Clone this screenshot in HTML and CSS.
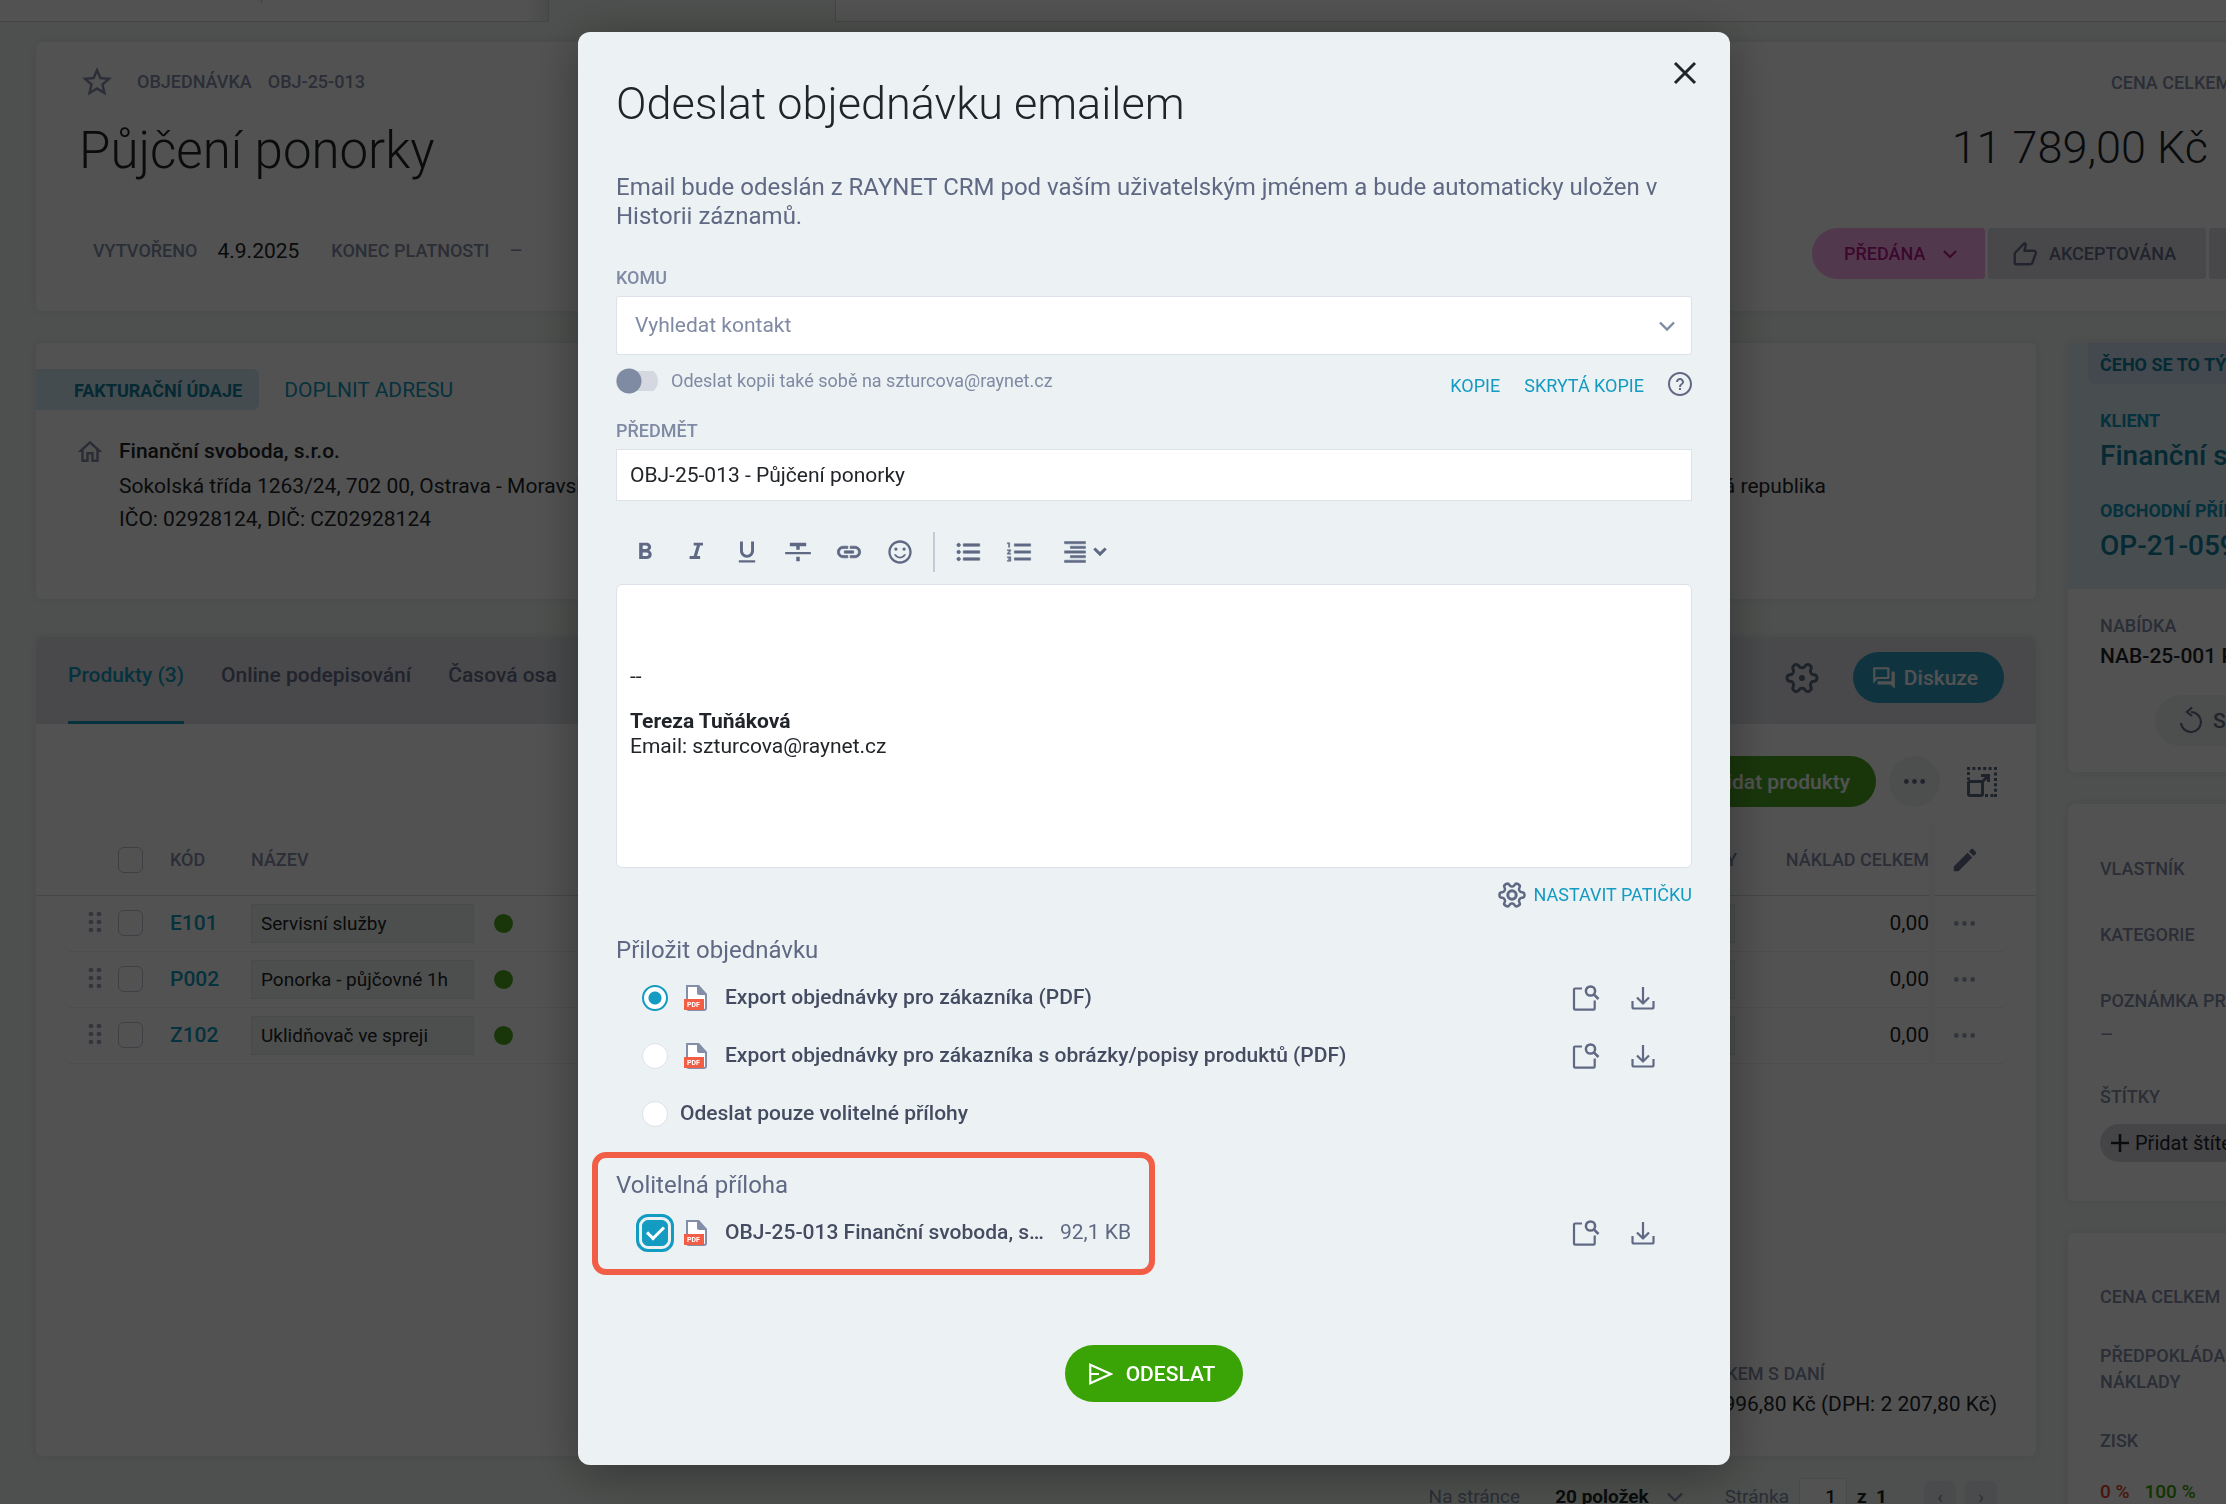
FILE: index.html
```html
<!DOCTYPE html>
<html lang="cs">
<head>
    <meta charset="UTF-8">
    <title>Půjčení ponorky - Objednávka</title>
    <link rel="stylesheet" href="styles.css">
</head>
<body>
    <svg class="sprite" aria-hidden="true">
        <symbol id="i-gear" viewBox="0 0 24 24"><path transform="rotate(90 12 12)" fill="none" stroke="currentColor" stroke-width="2" d="M12.22 2h-.44a2 2 0 0 0-2 2v.18a2 2 0 0 1-1 1.73l-.43.25a2 2 0 0 1-2 0l-.15-.08a2 2 0 0 0-2.73.73l-.22.38a2 2 0 0 0 .73 2.73l.15.1a2 2 0 0 1 1 1.72v.51a2 2 0 0 1-1 1.74l-.15.09a2 2 0 0 0-.73 2.73l.22.38a2 2 0 0 0 2.73.73l.15-.08a2 2 0 0 1 2 0l.43.25a2 2 0 0 1 1 1.73V20a2 2 0 0 0 2 2h.44a2 2 0 0 0 2-2v-.18a2 2 0 0 1 1-1.73l.43-.25a2 2 0 0 1 2 0l.15.08a2 2 0 0 0 2.73-.73l.22-.39a2 2 0 0 0-.73-2.73l-.15-.08a2 2 0 0 1-1-1.74v-.5a2 2 0 0 1 1-1.74l.15-.09a2 2 0 0 0 .73-2.73l-.22-.38a2 2 0 0 0-2.73-.73l-.15.08a2 2 0 0 1-2 0l-.43-.25a2 2 0 0 1-1-1.73V4a2 2 0 0 0-2-2z"/></symbol>
        <symbol id="i-chevron" viewBox="0 0 16 16"><path fill="none" stroke="currentColor" stroke-width="2.400" d="M1 4.500l7 7 7-7"/></symbol>
        <symbol id="i-dots" viewBox="0 0 24 24"><circle cx="3.500" cy="12" r="2.500"/><circle cx="12" cy="12" r="2.500"/><circle cx="20.500" cy="12" r="2.500"/></symbol>
        <symbol id="i-grip" viewBox="0 0 14 24"><circle cx="3" cy="3" r="2.300"/><circle cx="11" cy="3" r="2.300"/><circle cx="3" cy="11" r="2.300"/><circle cx="11" cy="11" r="2.300"/><circle cx="3" cy="19" r="2.300"/><circle cx="11" cy="19" r="2.300"/></symbol>
        <symbol id="i-preview" viewBox="0 0 28 28"><path fill="none" stroke="currentColor" stroke-width="2.200" stroke-linejoin="round" d="M10 4.500H3a1 1 0 0 0-1 1V24.500a1.200 1.200 0 0 0 1.200 1.200H21.500a1.200 1.200 0 0 0 1.200-1.200V16.500"/><circle cx="18.500" cy="7" r="4.600" fill="none" stroke="currentColor" stroke-width="2.500"/><path stroke="currentColor" stroke-width="2.600" d="M21.800 10.300l4.700 4.700"/></symbol>
        <symbol id="i-download" viewBox="0 0 24 24"><path fill="none" stroke="currentColor" stroke-width="2.200" stroke-linejoin="round" d="M12 1v16M6 11.500l6 6 6-6M1.500 15v6a1.500 1.500 0 0 0 1.500 1.500h18a1.500 1.500 0 0 0 1.500-1.500v-6"/></symbol>
        <symbol id="i-pdf" viewBox="0 0 24 28"><path fill="#fff" stroke="#838ea8" stroke-width="2" d="M3 2h11l8 9v13a2 2 0 0 1-2 2H5a2 2 0 0 1-2-2z"/><path fill="#838ea8" d="M13 1h2l8 9v1H15a2 2 0 0 1-2-2z"/><path fill="#f15d45" d="M0 15h20v11H0z"/><text x="3" y="23" font-family="Roboto, sans-serif" font-size="7" font-weight="700" fill="#fff">PDF</text></symbol>
    </svg>

    <div class="page">
        <header class="topbar">
            <div class="topbar__tabs"><i></i></div>
            <div class="topbar__active"></div>
            <div class="topbar__rest"></div>
        </header>

        <section class="card record">
            <div class="record__main">
                <div class="record__crumb">
                    <svg class="record__star" viewBox="0 0 24 24" fill="currentColor"><path d="M22 9.240l-7.190-.62L12 2 9.190 8.630 2 9.240l5.460 4.730L5.820 21 12 17.270 18.180 21l-1.630-7.030L22 9.240zM12 15.400l-3.760 2.270 1-4.280-3.320-2.880 4.380-.38L12 6.100l1.710 4.040 4.380.38-3.320 2.880 1 4.280L12 15.400z"/></svg>
                    <span class="label">OBJEDNÁVKA</span>
                    <span class="label">OBJ-25-013</span>
                </div>
                <h1 class="record__title">Půjčení ponorky</h1>
                <div class="record__meta">
                    <span class="label">VYTVOŘENO</span><span>4.9.2025</span>
                    <span class="label">KONEC PLATNOSTI</span><span class="muted">–</span>
                </div>
            </div>
            <div class="record__side">
                <div class="label record__pricelabel">CENA CELKEM</div>
                <div class="record__price">11 789,00 Kč</div>
                <div class="status">
                    <button class="status__item status__item--current" type="button">PŘEDÁNA <svg width="14" height="14"><use href="#i-chevron"/></svg></button>
                    <button class="status__item" type="button"><svg width="26" height="26" viewBox="0 0 24 24" fill="none" stroke="currentColor" stroke-width="2.200" stroke-linejoin="round"><path d="M2.500 12a2 2 0 0 1 .6-1.400L11.500 2l1.300 1.200-1.300 5.800H20a2 2 0 0 1 1.900 2.600l-3 8.400A2 2 0 0 1 17 21.500H4.500a2 2 0 0 1-2-2z"/></svg>AKCEPTOVÁNA</button>
                    <button class="status__item status__item--last" type="button" aria-label="Další stav"></button>
                </div>
            </div>
        </section>

        <div class="columns">
            <main class="main">
                <section class="card billing">
                    <div class="billing__head">
                        <h2 class="tag">FAKTURAČNÍ ÚDAJE</h2>
                        <a class="link" href="#">DOPLNIT ADRESU</a>
                    </div>
                    <div class="billing__body">
                        <svg class="billing__icon" viewBox="0 0 24 24" fill="currentColor"><path d="M12 5.690l5 4.500V18h-2v-6H9v6H7v-7.810l5-4.500M12 3L2 12h3v8h6v-6h2v6h6v-8h3L12 3z"/></svg>
                        <div class="billing__text">
                            <strong>Finanční svoboda, s.r.o.</strong>
                            <p class="billing__address"><span>Sokolská třída 1263/24, 702 00, Ostrava - Moravská Ostrava a Přívoz,</span><span>Česká republika</span></p>
                            <p>IČO: 02928124, DIČ: CZ02928124</p>
                        </div>
                    </div>
                </section>

                <section class="card products">
                    <div class="tabs">
                        <a class="tabs__item tabs__item--active" href="#">Produkty (3)</a>
                        <a class="tabs__item" href="#">Online podepisování</a>
                        <a class="tabs__item" href="#">Časová osa</a>
                        <button class="iconbtn tabs__gear" type="button" aria-label="Nastavení"><svg width="36" height="36"><use href="#i-gear"/><circle cx="18" cy="18" r="3" fill="currentColor"/></svg></button>
                        <button class="pill pill--teal" type="button"><svg width="26" height="26" viewBox="0 0 24 24" fill="currentColor"><path d="M15 4v7H5.170L4 12.170V4h11m1-2H3c-.55 0-1 .45-1 1v14l4-4h10c.55 0 1-.45 1-1V3c0-.55-.45-1-1-1zm5 4h-2v9H6v2c0 .55.45 1 1 1h11l4 4V7c0-.55-.45-1-1-1z"/></svg>Diskuze</button>
                    </div>
                    <div class="products__tools">
                        <button class="pill pill--green" type="button">Přidat produkty</button>
                        <button class="pill pill--round" type="button" aria-label="Více"><svg width="23" height="23"><use href="#i-dots"/></svg></button>
                        <button class="iconbtn" type="button" aria-label="Zvětšit"><svg width="30" height="30" viewBox="0 0 30 30" fill="none" stroke="currentColor" stroke-width="3"><path stroke-dasharray="3 2.400" d="M0 1.500h30M28.500 5.500v24.500M1.500 5v8M18 28.500h10"/><rect x="1.500" y="14.500" width="14" height="14" rx="1.500"/><path d="M15 15l7-7M14 8.500h7.500V15"/></svg></button>
                    </div>
                    <table class="grid">
                        <colgroup><col class="c-pad"><col class="c-grip"><col class="c-check"><col class="c-code"><col class="c-name"><col><col class="c-price"><col class="c-cost"><col class="c-edit"><col class="c-pad"></colgroup>
                        <thead>
                            <tr><th></th><th></th><th><input type="checkbox" aria-label="Vybrat vše"></th><th>KÓD</th><th>NÁZEV</th><th></th><th class="num">SLEVY</th><th class="num">NÁKLAD CELKEM</th><th class="edit"><svg width="30" height="30" viewBox="0 0 24 24" fill="currentColor"><path d="M3 17.250V21h3.750L17.810 9.940l-3.750-3.750L3 17.250zM20.710 7.040c.39-.39.39-1.020 0-1.410l-2.340-2.340c-.39-.39-1.020-.39-1.410 0l-1.830 1.830 3.750 3.750 1.830-1.830z"/></svg></th><th></th></tr>
                        </thead>
                        <tbody>
                            <tr><td></td><td><svg class="grip"><use href="#i-grip"/></svg></td><td><input type="checkbox" aria-label="Vybrat E101"></td><td><a href="#">E101</a></td><td><div class="cell">Servisní služby</div></td><td><i class="dot"></i></td><td><div class="cell"></div></td><td class="num">0,00</td><td class="edit"><svg width="23" height="23"><use href="#i-dots"/></svg></td><td></td></tr>
                            <tr><td></td><td><svg class="grip"><use href="#i-grip"/></svg></td><td><input type="checkbox" aria-label="Vybrat P002"></td><td><a href="#">P002</a></td><td><div class="cell">Ponorka - půjčovné 1h</div></td><td><i class="dot"></i></td><td><div class="cell"></div></td><td class="num">0,00</td><td class="edit"><svg width="23" height="23"><use href="#i-dots"/></svg></td><td></td></tr>
                            <tr><td></td><td><svg class="grip"><use href="#i-grip"/></svg></td><td><input type="checkbox" aria-label="Vybrat Z102"></td><td><a href="#">Z102</a></td><td><div class="cell">Uklidňovač ve spreji</div></td><td><i class="dot"></i></td><td><div class="cell"></div></td><td class="num">0,00</td><td class="edit"><svg width="23" height="23"><use href="#i-dots"/></svg></td><td></td></tr>
                        </tbody>
                    </table>
                    <div class="products__total">
                        <div>
                            <div class="label">CELKEM S DANÍ</div>
                            <div>13 996,80 Kč (DPH: 2 207,80 Kč)</div>
                        </div>
                    </div>
                </section>

                <div class="pager">
                    <span class="muted">Na stránce</span>
                    <button class="pager__size" type="button">20 položek <svg width="16" height="16"><use href="#i-chevron"/></svg></button>
                    <label class="muted" for="pageno">Stránka</label>
                    <input class="pager__input" id="pageno" type="text" value="1">
                    <b>z&nbsp; 1</b>
                    <button class="pager__nav" type="button">‹</button>
                    <button class="pager__nav" type="button">›</button>
                </div>
            </main>

            <aside class="side">
                <section class="card">
                    <div class="related">
                        <h2 class="tag tag--side">ČEHO SE TO TÝKÁ</h2>
                        <div class="related__label">KLIENT</div>
                        <a class="related__link" href="#">Finanční svoboda, s.r.o.</a>
                        <div class="related__label">OBCHODNÍ PŘÍPAD</div>
                        <a class="related__link" href="#">OP-21-059</a>
                    </div>
                    <div class="offer">
                        <div class="label">NABÍDKA</div>
                        <strong>NAB-25-001 Ponorka</strong>
                        <button class="pill pill--grey" type="button"><svg width="24" height="28" viewBox="0 0 24 28" fill="none" stroke="currentColor" stroke-width="2.200"><path d="M12 5a10 10 0 1 1-10 11M13 .5L8 5l5 4"/></svg>Synchronizovat</button>
                    </div>
                </section>
                <section class="card detail">
                    <div class="label">VLASTNÍK</div>
                    <div class="label">KATEGORIE</div>
                    <div class="label">POZNÁMKA PRO</div>
                    <div class="muted">–</div>
                    <div class="label">ŠTÍTKY</div>
                    <button class="chip" type="button"><svg width="18" height="18" viewBox="0 0 18 18" stroke="currentColor" stroke-width="2.500"><path d="M9 0v18M0 9h18"/></svg>Přidat štítek</button>
                </section>
                <section class="card sums">
                    <div class="label">CENA CELKEM</div>
                    <div class="label">PŘEDPOKLÁDANÉ<br>NÁKLADY</div>
                    <div class="label">ZISK</div>
                    <div class="sums__pct"><span class="red">0 %</span><span class="green">100 %</span></div>
                </section>
            </aside>
        </div>
    </div>

    <div class="backdrop">
        <form class="modal" role="dialog" aria-labelledby="modal-title">
            <button class="iconbtn modal__close" type="button" aria-label="Zavřít"><svg width="24" height="24" viewBox="0 0 24 24" stroke="currentColor" stroke-width="3"><path d="M2 2l20 20M22 2L2 22"/></svg></button>
            <h2 class="modal__title" id="modal-title">Odeslat objednávku emailem</h2>
            <p class="modal__intro">Email bude odeslán z RAYNET CRM pod vaším uživatelským jménem a bude automaticky uložen v Historii záznamů.</p>

            <label class="label modal__label" for="to">KOMU</label>
            <div class="combo">
                <select id="to"><option>Vyhledat kontakt</option></select>
                <svg width="16" height="16"><use href="#i-chevron"/></svg>
            </div>
            <div class="copyrow">
                <input class="toggle" id="copy" type="checkbox" role="switch">
                <label for="copy">Odeslat kopii také sobě na szturcova@raynet.cz</label>
                <a class="link link--small" href="#">KOPIE</a>
                <a class="link link--small" href="#">SKRYTÁ KOPIE</a>
                <svg width="24" height="24" viewBox="0 0 24 24" fill="currentColor"><path d="M11 18h2v-2h-2v2zm1-18C5.370 0 0 5.370 0 12s5.370 12 12 12 12-5.370 12-12S18.630 0 12 0zm0 22C6.500 22 2 17.500 2 12S6.500 2 12 2s10 4.500 10 10-4.500 10-10 10zm0-16c-2.210 0-4 1.790-4 4h2c0-1.100.9-2 2-2s2 .9 2 2c0 2-3 1.750-3 5h2c0-2.250 3-2.500 3-5 0-2.210-1.790-4-4-4z"/></svg>
            </div>

            <label class="label modal__label" for="subject">PŘEDMĚT</label>
            <input class="subject" id="subject" type="text" value="OBJ-25-013 - Půjčení ponorky">

            <div class="toolbar">
                <button type="button" aria-label="Tučné"><svg viewBox="0 0 24 24"><path d="M15.600 10.790c.97-.67 1.650-1.770 1.650-2.790 0-2.260-1.750-4-4-4H7v14h7.040c2.090 0 3.710-1.700 3.710-3.790 0-1.520-.86-2.820-2.150-3.420zM10 6.500h3c.83 0 1.500.67 1.500 1.500s-.67 1.500-1.500 1.500h-3v-3zm3.500 9H10v-3h3.500c.83 0 1.500.67 1.500 1.500s-.67 1.500-1.500 1.500z"/></svg></button>
                <button type="button" aria-label="Kurzíva"><svg viewBox="0 0 24 24"><path d="M10 4v2.500h2.700l-2.700 9H6.500V18h9v-2.500h-2.700l2.700-9H18V4z"/></svg></button>
                <button type="button" aria-label="Podtržené"><svg viewBox="0 0 24 24"><path d="M12 17c3.310 0 6-2.690 6-6V3h-2.500v8c0 1.930-1.570 3.500-3.500 3.500S8.500 12.930 8.500 11V3H6v8c0 3.310 2.690 6 6 6zm-7 2v2h14v-2H5z"/></svg></button>
                <button type="button" aria-label="Přeškrtnuté"><svg viewBox="0 0 24 24"><path d="M10.500 20h3v-4h-3v4zM5 4v3h5.500v3h3V7H19V4H5zM1 14h22v-2H1v2z"/></svg></button>
                <button type="button" aria-label="Odkaz"><svg viewBox="0 0 24 24"><path stroke="currentColor" stroke-width=".6" d="M3.900 12c0-1.710 1.390-3.100 3.100-3.100h4V7H7c-2.760 0-5 2.240-5 5s2.240 5 5 5h4v-1.900H7c-1.710 0-3.100-1.390-3.100-3.100zM8 13h8v-2H8v2zm9-6h-4v1.900h4c1.710 0 3.100 1.390 3.100 3.100s-1.390 3.100-3.100 3.100h-4V17h4c2.760 0 5-2.240 5-5s-2.240-5-5-5z"/></svg></button>
                <button type="button" aria-label="Emotikon"><svg viewBox="0 0 24 24"><circle cx="15.500" cy="9.500" r="1.400"/><circle cx="8.500" cy="9.500" r="1.400"/><path d="M12 16c-1.480 0-2.750-.81-3.450-2H6.880c.8 2.050 2.790 3.500 5.120 3.500s4.320-1.450 5.120-3.500h-1.670c-.7 1.190-1.970 2-3.450 2zm-.01-14C6.470 2 2 6.480 2 12s4.470 10 9.990 10C17.520 22 22 17.520 22 12S17.520 2 11.990 2zM12 20c-4.420 0-8-3.580-8-8s3.580-8 8-8 8 3.580 8 8-3.580 8-8 8z"/></svg></button>
                <i class="toolbar__sep"></i>
                <button type="button" aria-label="Odrážky"><svg viewBox="0 0 24 24"><path stroke="currentColor" stroke-width=".6" d="M4 10.500c-.83 0-1.500.67-1.500 1.500s.67 1.500 1.500 1.500 1.500-.67 1.500-1.500-.67-1.500-1.500-1.500zm0-6c-.83 0-1.500.67-1.500 1.500S3.170 7.500 4 7.500 5.500 6.830 5.500 6 4.830 4.500 4 4.500zm0 12c-.83 0-1.500.68-1.500 1.500s.68 1.500 1.500 1.500 1.500-.68 1.500-1.500-.67-1.500-1.500-1.500zM8 19h14v-2H8v2zm0-6h14v-2H8v2zm0-8v2h14V5H8z"/></svg></button>
                <button type="button" aria-label="Číslování"><svg viewBox="0 0 24 24"><path stroke="currentColor" stroke-width=".4" d="M2 17h2v.5H3v1h1v.5H2v1h3v-4H2v1zm1-9h1V4H2v1h1v3zm-1 3h1.800L2 13.100v.9h3v-1H3.200L5 10.900V10H2v1zm6-6v2h14V5H8zm0 14h14v-2H8v2zm0-6h14v-2H8v2z"/></svg></button>
                <button class="toolbar__align" type="button" aria-label="Zarovnání"><svg viewBox="0 0 24 24"><path stroke="currentColor" stroke-width=".4" d="M3 21h18v-2H3v2zm5-4h13v-2H8v2zm-5-4h18v-2H3v2zm5-4h13V7H8v2zM3 3v2h18V3H3z"/></svg><svg class="toolbar__caret" viewBox="0 0 16 16"><path fill="none" stroke="currentColor" stroke-width="3.500" d="M1.500 4l6.500 6.500L14.500 4"/></svg></button>
            </div>
            <div class="editor" contenteditable="true" role="textbox" aria-multiline="true" aria-label="Text emailu">
                <p>--</p>
                <p><b>Tereza Tuňáková</b><br>Email: szturcova@raynet.cz</p>
            </div>
            <a class="link link--small footerlink" href="#"><svg width="30" height="30"><use href="#i-gear"/><circle cx="15" cy="15" r="4.200" fill="none" stroke="currentColor" stroke-width="3"/></svg>NASTAVIT PATIČKU</a>

            <section class="attach">
                <h3>Přiložit objednávku</h3>
                <div class="attach__row">
                    <input type="radio" name="export" id="e1" checked>
                    <label for="e1"><svg class="pdf"><use href="#i-pdf"/></svg><span>Export objednávky pro zákazníka (PDF)</span></label>
                    <button class="iconbtn" type="button" aria-label="Náhled"><svg width="28" height="28"><use href="#i-preview"/></svg></button>
                    <button class="iconbtn" type="button" aria-label="Stáhnout"><svg width="24" height="24"><use href="#i-download"/></svg></button>
                </div>
                <div class="attach__row">
                    <input type="radio" name="export" id="e2">
                    <label for="e2"><svg class="pdf"><use href="#i-pdf"/></svg><span>Export objednávky pro zákazníka s obrázky/popisy produktů (PDF)</span></label>
                    <button class="iconbtn" type="button" aria-label="Náhled"><svg width="28" height="28"><use href="#i-preview"/></svg></button>
                    <button class="iconbtn" type="button" aria-label="Stáhnout"><svg width="24" height="24"><use href="#i-download"/></svg></button>
                </div>
                <div class="attach__row">
                    <input type="radio" name="export" id="e3">
                    <label for="e3"><span>Odeslat pouze volitelné přílohy</span></label>
                </div>
            </section>
            <section class="attach attach--optional">
                <h3>Volitelná příloha</h3>
                <div class="attach__row">
                    <input type="checkbox" id="a1" checked>
                    <label for="a1"><svg class="pdf"><use href="#i-pdf"/></svg><span>OBJ-25-013 Finanční svoboda, s…</span></label>
                    <span class="attach__size">92,1 KB</span>
                    <button class="iconbtn" type="button" aria-label="Náhled"><svg width="28" height="28"><use href="#i-preview"/></svg></button>
                    <button class="iconbtn" type="button" aria-label="Stáhnout"><svg width="24" height="24"><use href="#i-download"/></svg></button>
                </div>
            </section>

            <button class="send" type="submit"><svg width="26" height="26" viewBox="0 0 24 24" fill="none" stroke="currentColor" stroke-width="2"><path d="M3 3.500l19 8.500-19 8.500zM3 12h8"/></svg>ODESLAT</button>
        </form>
    </div>
</body>
</html>
```

FILE: styles.css
```css
*,
*::before,
*::after {
    box-sizing: border-box;
}

body {
    margin: 0;
    height: 100vh;
    overflow: hidden;
    background: #f0f8f2;
    color: #212529;
    font-family: Roboto, "Liberation Sans", sans-serif;
    font-size: 21px;
    line-height: 28px;
}

h1, h2, h3, p {
    margin: 0;
    font-weight: 400;
}

button, input, select {
    margin: 0;
    font: inherit;
    color: inherit;
}

button {
    padding: 0;
    border: 0;
    background: none;
    white-space: nowrap;
}

a {
    color: #139bc1;
    text-decoration: none;
}

svg {
    display: block;
    flex: none;
}

strong {
    font-weight: 500;
}

use {
    fill: currentColor;
}

.sprite {
    position: absolute;
    width: 0;
    height: 0;
}

.label {
    color: #868fab;
    font-size: 18px;
    font-weight: 500;
    line-height: 20px;
    white-space: nowrap;
}

.muted {
    color: #868fab;
}

.iconbtn {
    color: #5f6983;
}

/* the right side of the page runs out of the window */
.page {
    width: calc(100% + 240px);
}

.topbar {
    display: flex;
    height: 22px;
}

.topbar__tabs {
    width: 549px;
    padding-left: 261px;
    background: linear-gradient(to left, #e4e8e6, #fff 24px);
    border-bottom: 1px solid #d2d8d4;
    border-right: 1px solid #d2d8d4;
}

.topbar__tabs i {
    display: block;
    width: 1px;
    height: 3px;
    background: #c4c8d0;
}

.topbar__active {
    width: 286px;
}

.topbar__rest {
    flex: 1;
    background: #fff;
    border-bottom: 1px solid #d2d8d4;
    border-left: 1px solid #d2d8d4;
}

.card {
    background: #fff;
    border-radius: 6px;
    box-shadow: 0 0 8px rgba(100, 120, 170, 0.15);
}

.record {
    display: flex;
    justify-content: space-between;
    margin: 20px 36px 32px;
    padding-bottom: 32px;
}

.record__main {
    padding: 21px 0 0 43px;
}

.record__crumb {
    display: flex;
    align-items: center;
    gap: 16px;
    height: 38px;
}

.record__star {
    width: 36px;
    height: 36px;
    margin-right: 6px;
    color: #868fab;
}

.record__title {
    margin: 20px 0 56px;
    font-size: 51px;
    font-weight: 300;
    line-height: 60px;
}

.record__meta {
    display: flex;
    align-items: center;
    gap: 20px;
    height: 28px;
    padding-left: 14px;
}

.record__meta span:nth-child(2) {
    margin-right: 12px;
}

.record__side {
    width: 618px;
    padding-top: 31px;
}

.record__pricelabel {
    padding-left: 299px;
}

.record__price {
    width: 396px;
    margin: 28px 0 53px;
    font-size: 45px;
    font-weight: 300;
    line-height: 54px;
    text-align: right;
}

.status {
    display: flex;
    gap: 3px;
}

.status__item {
    display: flex;
    align-items: center;
    gap: 11px;
    width: 218px;
    height: 51px;
    padding-left: 24px;
    border-radius: 3px;
    background: #dfe1e6;
    color: #666e8c;
    font-size: 18px;
    font-weight: 500;
}

.status__item--current {
    gap: 18px;
    width: 173px;
    padding-left: 32px;
    border-radius: 26px 3px 3px 26px;
    background: #ffaff0;
    color: #b81a8c;
}

.status__item--last {
    flex: 1;
}

.columns {
    display: flex;
    gap: 32px;
    padding: 0 36px;
}

.main {
    flex: 1;
    min-width: 0;
}

.tag {
    height: 41px;
    padding: 0 17px 0 38px;
    border-radius: 0 6px 6px 0;
    background: #d7ebf8;
    color: #12839f;
    font-size: 18px;
    font-weight: 700;
    line-height: 43px;
}

.tag--side {
    margin: 0 0 27px 20px;
    padding: 0 12px;
    border-radius: 0 0 0 6px;
    background: #cfe2f5;
    line-height: 43px;
    white-space: nowrap;
}

.billing {
    padding: 26px 0 63px;
}

.billing__head {
    display: flex;
    align-items: center;
    gap: 25px;
}

.billing__body {
    display: flex;
    gap: 14px;
    padding: 25px 39px 0;
    line-height: 33px;
}

.billing__text {
    flex: 1;
}

.billing__text strong {
    display: block;
    margin-bottom: 2px;
}

.billing__address {
    display: flex;
    justify-content: space-between;
    padding-right: 171px;
}

.billing__icon {
    width: 30px;
    height: 34px;
    color: #868fab;
}

.products {
    margin-top: 38px;
    padding-bottom: 38px;
    overflow: hidden;
}

.tabs {
    display: flex;
    align-items: center;
    height: 87px;
    padding: 0 32px;
    background: #e2e4e8;
}

.tabs__item {
    height: 87px;
    margin-right: 37px;
    color: #666e8c;
    font-weight: 500;
    line-height: 76px;
}

.tabs__item--active {
    border-bottom: 3px solid #139bc1;
    color: #139bc1;
}

.tabs button {
    margin-bottom: 6px;
}

.tabs .tabs__gear {
    margin-left: auto;
    margin-right: 33px;
}

.pill {
    display: flex;
    align-items: center;
    justify-content: center;
    gap: 7px;
    height: 51px;
    padding: 0 26px 0 18px;
    border-radius: 26px;
    font-weight: 500;
}

.pill--teal {
    background: #2fa3c8;
    color: #fff;
}

.pill--green {
    padding: 0 26px;
    background: #4ea925;
    color: #fff;
}

.pill--round {
    width: 51px;
    padding: 0;
    background: #eef3f1;
    color: #666e8c;
}

.pill--grey {
    margin: 25px 0 0 55px;
    padding: 0 24px;
    gap: 10px;
    background: #eef3f1;
    color: #666e8c;
}

.products__tools {
    display: flex;
    align-items: center;
    justify-content: flex-end;
    padding: 32px 39px 18px;
}

.products__tools .pill--round {
    margin: 0 27px 0 13px;
}

.grid {
    width: 100%;
    table-layout: fixed;
    border-collapse: collapse;
}

.c-pad { width: 33px; }
.c-grip { width: 46px; }
.c-check { width: 55px; }
.c-code { width: 81px; }
.c-name { width: 236px; }
.c-price { width: 197px; }
.c-cost { width: 195px; }
.c-edit { width: 71px; }

.grid th {
    height: 70px;
    padding: 0;
    border-bottom: 1px solid #d5d8e0;
    color: #868fab;
    font-size: 18px;
    font-weight: 500;
    text-align: left;
}

.grid td {
    height: 56px;
    padding: 0;
    border-bottom: 1px solid #eceef2;
}

.grid td:first-child,
.grid td:last-child {
    border: 0;
}

.grid a {
    font-weight: 500;
}

.grid .num {
    text-align: right;
}

.grid .edit {
    padding-left: 18px;
    border-left: 6px solid #f9f9fa;
    color: #a0a6ba;
}

.grid th.edit {
    padding-left: 15px;
    color: #666e8c;
}

.grid input {
    display: block;
    appearance: none;
    width: 25px;
    height: 26px;
    margin-left: 3px;
    border: 1px solid #bfc4d2;
    border-radius: 6px;
}

.grip {
    width: 14px;
    height: 24px;
    margin-left: 19px;
    color: #a0a6ba;
}

.cell {
    width: 223px;
    height: 39px;
    padding-left: 9px;
    border: 1px solid #e2e8e5;
    background: #f0f5f3;
    font-size: 19px;
    line-height: 38px;
}

td:nth-child(7) .cell {
    width: 195px;
}

.dot {
    display: block;
    width: 19px;
    height: 19px;
    margin-left: 7px;
    border-radius: 50%;
    background: #4ea925;
}

.products__total {
    display: flex;
    justify-content: flex-end;
    padding: 300px 39px 0;
}

.products__total .label {
    margin-bottom: 6px;
}

.pager {
    display: flex;
    align-items: center;
    justify-content: flex-end;
    height: 38px;
    margin: 22px 39px 0 0;
    font-size: 19px;
}

.pager__size {
    display: flex;
    align-items: center;
    gap: 18px;
    margin: 0 42px 0 35px;
    font-weight: 700;
}

.pager__size svg {
    color: #868fab;
}

.pager__input {
    width: 48px;
    height: 38px;
    margin: 0 10px;
    padding: 0 10px;
    border: 1px solid #e2e4ea;
    border-radius: 3px;
    background: #fff;
    font-weight: 500;
    text-align: right;
}

.pager__nav {
    width: 32px;
    height: 32px;
    margin-left: 9px;
    border-radius: 6px;
    background: #e6e9ee;
    color: #868fab;
}

b + .pager__nav {
    margin-left: 37px;
}

.side {
    display: flex;
    flex-direction: column;
    gap: 32px;
    width: 362px;
}

.side .card {
    overflow: hidden;
}

.related {
    padding-bottom: 25px;
    background: #e1eef8;
}

.related__label {
    padding-left: 32px;
    color: #139bc1;
    font-size: 18px;
    font-weight: 700;
    line-height: 20px;
}

.related__link {
    display: block;
    margin: 7px 0 27px 32px;
    color: #12839f;
    font-size: 28px;
    font-weight: 500;
    line-height: 36px;
    white-space: nowrap;
}

.related__link:last-child {
    margin-bottom: 0;
}

.offer {
    padding: 27px 0 26px 32px;
}

.offer .label {
    margin-bottom: 6px;
}

.offer strong {
    display: block;
}

.detail {
    padding: 55px 32px 39px;
}

.detail .label {
    margin-bottom: 46px;
}

.detail .label:nth-child(3) {
    margin-bottom: 10px;
}

.detail .muted {
    margin-bottom: 38px;
}

.detail .label:nth-child(5) {
    margin-bottom: 17px;
}

.chip {
    display: flex;
    align-items: center;
    gap: 6px;
    height: 38px;
    padding: 0 18px 0 11px;
    border-radius: 19px;
    background: #d5d7dd;
    font-size: 20px;
}

.sums {
    padding: 54px 32px 39px;
}

.sums .label {
    margin-bottom: 36px;
}

.sums .label:nth-child(2) {
    line-height: 26px;
}

.sums .label:nth-child(3) {
    margin-bottom: 27px;
}

.sums__pct {
    display: flex;
    gap: 15px;
    font-size: 19px;
    font-weight: 500;
}

.red { color: #e0452f; }
.green { color: #3aa305; }

.backdrop {
    position: fixed;
    inset: 0 -82px 0 0;
    padding-top: 32px;
    background: rgba(0, 0, 0, 0.68);
}

.modal {
    position: relative;
    max-width: 1152px;
    margin: 0 auto;
    padding: 44px 38px 63px;
    border-radius: 12px;
    background: #ecf1f4;
    box-shadow: 0 8px 50px rgba(0, 0, 0, 0.35);
}

.modal__close {
    position: absolute;
    top: 29px;
    right: 33px;
    color: #212529;
}

.modal__title {
    font-size: 45px;
    font-weight: 300;
    line-height: 56px;
}

.modal__intro {
    margin: 41px 0 37px;
    color: #5f6983;
    font-size: 24px;
    line-height: 29px;
}

.modal__label {
    display: block;
    margin-bottom: 8px;
    color: #7f8aa3;
}

.combo {
    display: grid;
    align-items: center;
    color: #7f8aa3;
}

.combo select,
.combo svg {
    grid-area: 1 / 1;
}

.combo svg {
    justify-self: end;
    margin-right: 17px;
    pointer-events: none;
}

.combo select {
    appearance: none;
    width: 100%;
    height: 59px;
    padding: 0 18px 2px;
    border: 1px solid #dde1e8;
    border-radius: 3px;
    background: #fff;
}

.copyrow {
    display: flex;
    align-items: flex-end;
    height: 28px;
    margin: 13px 0 25px;
    color: #5f6983;
}

.copyrow label {
    align-self: flex-start;
    margin: 0 auto 0 13px;
    color: #7f8aa3;
    font-size: 18px;
    line-height: 26px;
}

.toggle {
    appearance: none;
    align-self: flex-start;
    width: 42px;
    height: 26px;
    background: radial-gradient(circle at 13px 13px, #7f8aa3 12px, transparent 13px), linear-gradient(#d5d8e0, #d5d8e0) 0 3px / 42px 20px no-repeat;
    border-radius: 13px;
}

.link--small {
    font-size: 18px;
    line-height: 20px;
}

.copyrow .link {
    margin-right: 24px;
}

.subject {
    display: block;
    width: 100%;
    height: 52px;
    padding: 0 13px;
    border: 1px solid #dde1e8;
    background: #fff;
}

.toolbar {
    display: flex;
    align-items: center;
    height: 40px;
    margin: 31px 0 12px;
    padding-left: 3px;
    color: #5f6983;
}

.toolbar button {
    display: flex;
    align-items: center;
    justify-content: center;
    width: 51px;
}

.toolbar svg {
    width: 28px;
    height: 28px;
    fill: currentColor;
}

.toolbar__sep {
    width: 2px;
    height: 40px;
    margin: 0 7px 0 8px;
    background: #c5cad5;
}

.toolbar .toolbar__align {
    gap: 4px;
    width: 60px;
    margin-left: 10px;
}

.toolbar .toolbar__caret {
    width: 14px;
    height: 14px;
}

.editor {
    min-height: 284px;
    padding: 79px 13px;
    border: 1px solid #dde1e8;
    border-radius: 6px;
    background: #fff;
    line-height: 25px;
}

.editor p + p {
    margin-top: 20px;
}

.footerlink {
    display: flex;
    align-items: center;
    justify-content: flex-end;
    gap: 7px;
    height: 28px;
    margin: 13px 0 27px;
}

.footerlink svg {
    color: #5f6983;
}

.attach h3 {
    margin-bottom: 5px;
    color: #5f6983;
    font-size: 24px;
}

.attach__row {
    display: flex;
    align-items: center;
    height: 58px;
    padding: 0 37px 0 26px;
    color: #444c61;
    font-weight: 500;
}

.attach__row label {
    display: flex;
    align-items: center;
    margin-left: 12px;
}

.attach__row span {
    padding-bottom: 2px;
}

.pdf {
    width: 24px;
    height: 28px;
    margin: 0 17px 0 4px;
}

.attach__row button {
    margin-left: 31px;
}

.attach__row :not(button) + button {
    margin-left: auto;
}

.attach__size {
    margin-left: 16px;
    color: #5f6983;
    font-weight: 400;
}

.attach__row input {
    appearance: none;
    width: 26px;
    height: 26px;
    border: 1px solid #dde1e8;
    border-radius: 50%;
    background: #fff;
}

.attach__row input[type="radio"]:checked {
    border: 2px solid #139bc1;
    background: radial-gradient(circle, #139bc1 6px, #fff 7px);
}

.attach__row input[type="checkbox"] {
    display: grid;
    place-items: center;
    border-color: #139bc1;
    border-radius: 6px;
    background: #139bc1;
    outline: 3px solid #139bc1;
    outline-offset: 3px;
}

.attach__row input[type="checkbox"]::after {
    content: "";
    width: 17px;
    height: 10px;
    border: solid #fff;
    border-width: 0 0 3px 3px;
    transform: translateY(-2px) rotate(-45deg);
}

.attach--optional {
    position: relative;
    margin: 28px 0 83px;
}

/* highlight frame around the optional attachment */
.attach--optional::before {
    content: "";
    position: absolute;
    top: -19px;
    left: -24px;
    width: 563px;
    height: 123px;
    border: 6px solid #f15d45;
    border-radius: 14px;
    pointer-events: none;
}

.send {
    display: flex;
    align-items: center;
    gap: 13px;
    height: 57px;
    margin: 0 auto;
    padding: 0 28px 0 22px;
    border-radius: 29px;
    background: #3aa305;
    color: #fff;
    font-weight: 500;
}
```
